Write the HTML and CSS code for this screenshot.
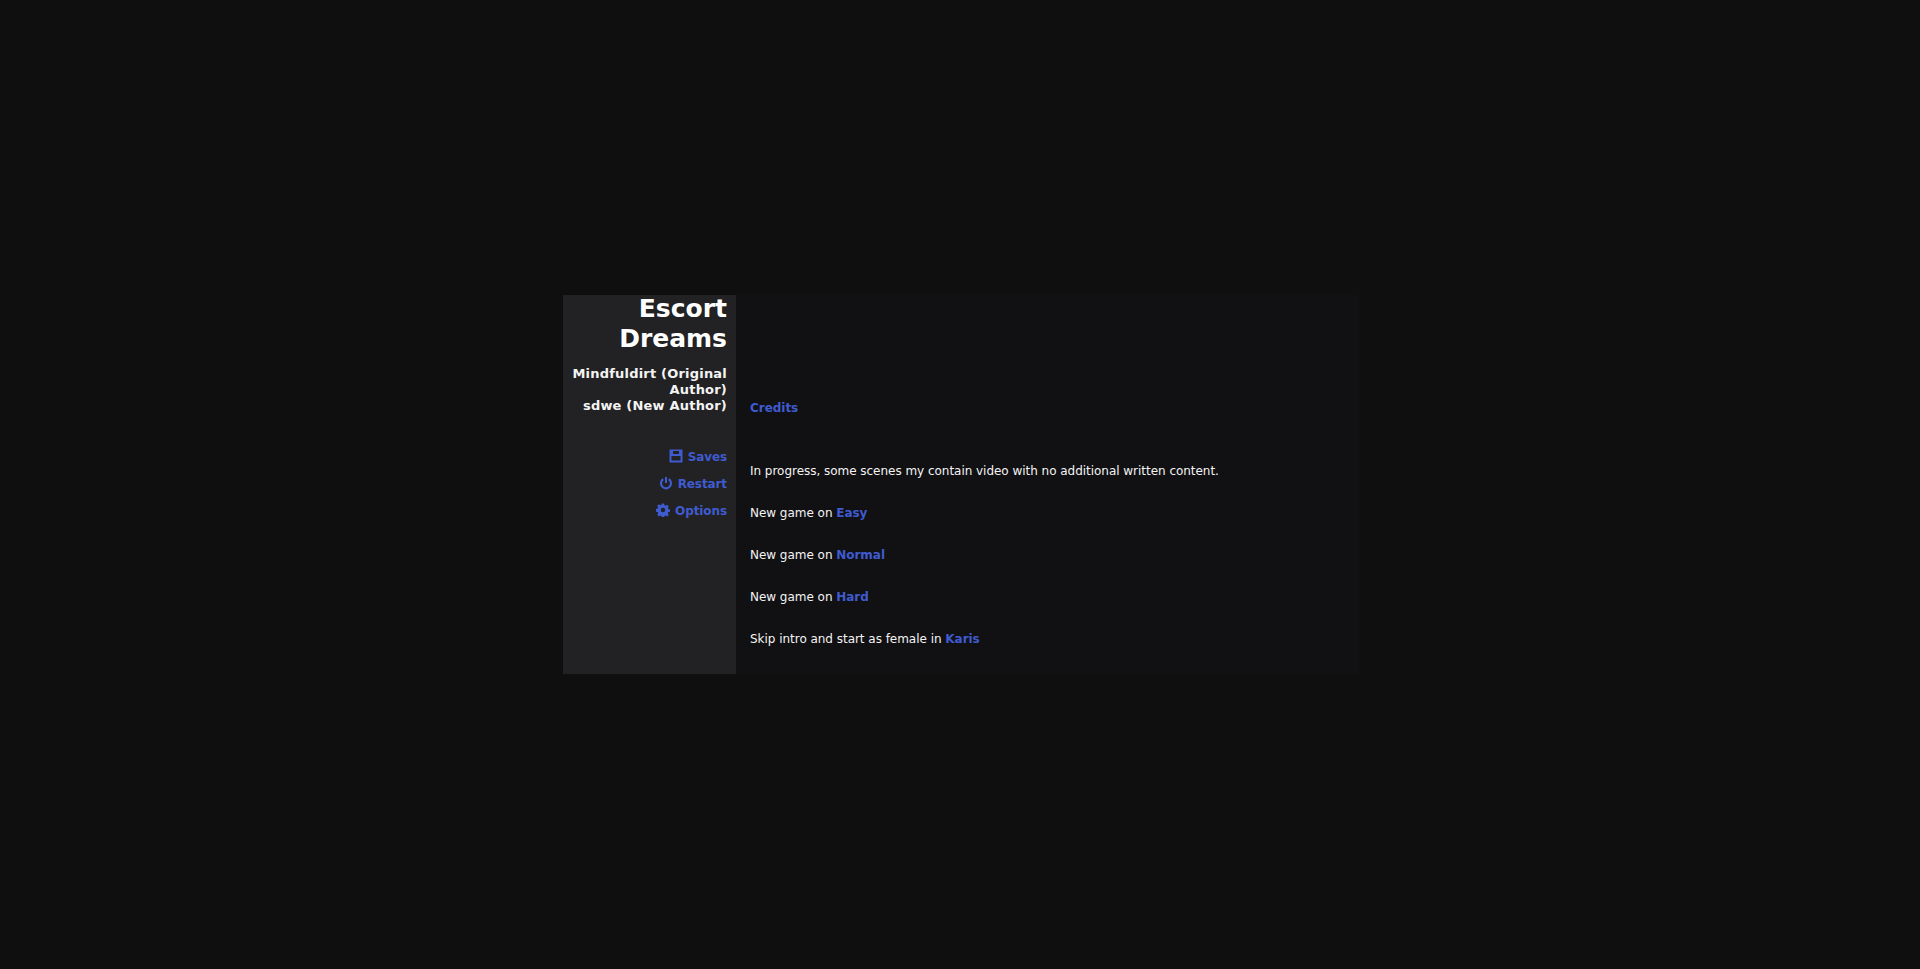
FILE: index.html
```html
<!DOCTYPE html>
<html lang="en">
<head>
    <meta charset="UTF-8">
    <meta name="viewport" content="width=device-width, initial-scale=1.0">
    <title>Escort Dreams</title>
    <link rel="stylesheet" href="styles.css">
</head>
<body>
    <div class="game-box">
        <div class="game-side">
            <h1 class="game-title">Escort Dreams</h1>
            <p class="game-author">Mindfuldirt (Original Author)<br>sdwe (New Author)</p>
            <ul class="game-menu">
                <li>
                    <a href="#saves">
                        <svg class="menu-icon" viewBox="0 0 14 14"><path fill-rule="evenodd" d="M.5 .5h13v13H.5zM2.5 7v4.5h9V7zM4 2v3h6V2z"/></svg>
                        Saves
                    </a>
                </li>
                <li>
                    <a href="#restart">
                        <svg class="menu-icon" viewBox="0 0 14 14"><path d="M4.2 3.2a5 5 0 1 0 5.6 0" fill="none" stroke="currentColor" stroke-width="2.2"/><path d="M7 1v6" fill="none" stroke="currentColor" stroke-width="2"/></svg>
                        Restart
                    </a>
                </li>
                <li>
                    <a href="#options">
                        <svg class="menu-icon" viewBox="0 0 14 14"><path fill-rule="evenodd" d="M5.8 .5h2.4l.3 1.8 1.1.5 1.5-1 1.7 1.7-1 1.5.5 1.1 1.8.3v2.4l-1.8.3-.5 1.1 1 1.5-1.7 1.7-1.5-1-1.1.5-.3 1.8H5.8l-.3-1.8-1.1-.5-1.5 1-1.7-1.7 1-1.5-.5-1.1-1.8-.3V5.8l1.8-.3.5-1.1-1-1.5 1.7-1.7 1.5 1 1.1-.5zM7 4.8a2.2 2.2 0 1 0 0 4.4 2.2 2.2 0 0 0 0-4.4z"/></svg>
                        Options
                    </a>
                </li>
            </ul>
        </div>

        <div class="game-main">
            <p class="credits"><a href="#credits">Credits</a></p>
            <p class="notice">In progress, some scenes my contain video with no additional written content.</p>
            <p>New game on <a href="#easy">Easy</a></p>
            <p>New game on <a href="#normal">Normal</a></p>
            <p>New game on <a href="#hard">Hard</a></p>
            <p>Skip intro and start as female in <a href="#karis">Karis</a></p>
        </div>
    </div>
</body>
</html>
```

FILE: styles.css
```css
/* Page */
html, body {
    height: 100%;
}

body {
    margin: 0;
    padding: 0 0 0 2px;
    box-sizing: border-box;
    display: flex;
    align-items: center;
    justify-content: center;
    background-color: #0f0f10;
    color: #f4f4f4;
    font-family: "DejaVu Sans", sans-serif;
    font-size: 12px;
    letter-spacing: -0.03px;
}

a {
    color: #3f5bd0;
    font-weight: bold;
    text-decoration: none;
}

.game-box {
    display: flex;
    width: 796px;
    height: 379px;
}

/* Left column */
.game-side {
    width: 173px;
    padding: 0 9px;
    box-sizing: border-box;
    background-color: #222123;
    text-align: right;
}

.game-title {
    margin: 0;
    color: #fff;
    font-size: 25px;
    line-height: 30px;
    letter-spacing: 0;
    transform: translateY(-1px);
}

.game-author {
    margin: 11px 0 0;
    font-size: 13px;
    font-weight: bold;
    line-height: 16px;
    letter-spacing: 0.2px;
}

.game-menu {
    margin: 30px 0 0;
    padding: 0;
    list-style: none;
    letter-spacing: -0.1px;
}

.game-menu li {
    height: 27px;
    line-height: 27px;
}

.menu-icon {
    width: 14px;
    height: 14px;
    margin-right: 1px;
    vertical-align: -2px;
    fill: currentColor;
}

/* Right column */
.game-main {
    flex: 1;
    padding: 0 14px;
    background-color: #111013;
}

.game-main p {
    margin: 0 0 27px;
    line-height: 15px;
}

.game-main .credits {
    margin-bottom: 48px;
    padding-top: 106px;
}
```
